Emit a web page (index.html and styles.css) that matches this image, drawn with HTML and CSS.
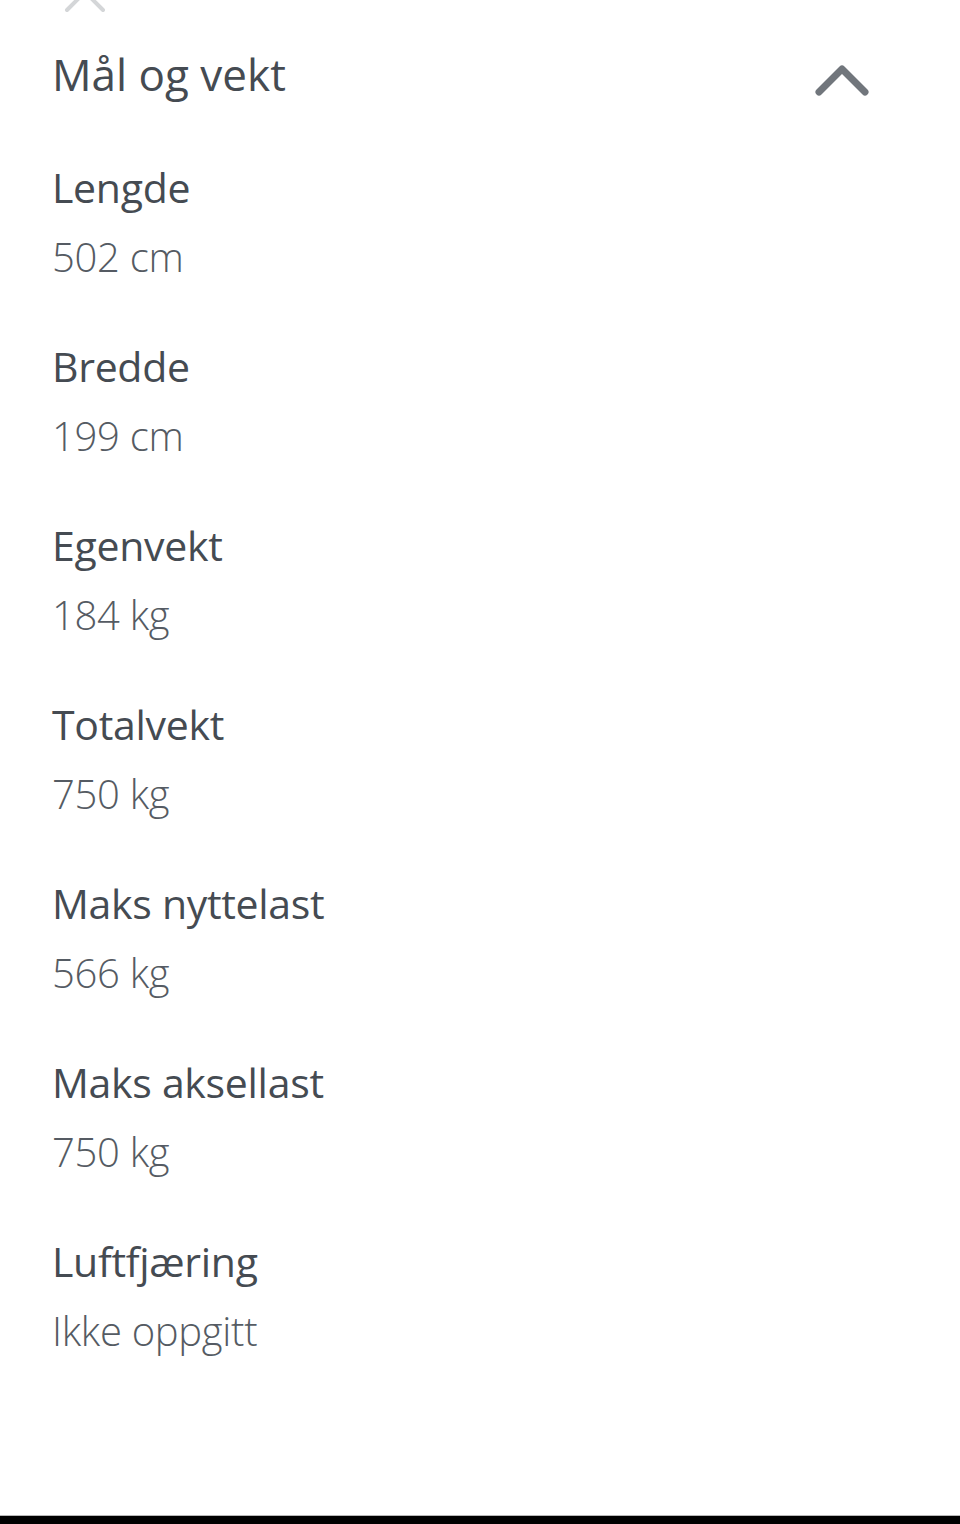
FILE: index.html
```html
<!DOCTYPE html>
<html lang="no">
<head>
<meta charset="utf-8">
<link rel="stylesheet" href="styles.css">
</head>
<body>
<div class="screen">
  <div class="close-wrap">
    <svg class="close" width="44" height="44" viewBox="0 0 44 44"><path d="M4 4 L40 40 M40 4 L4 40" stroke="#d4d6d8" stroke-width="4" stroke-linecap="round" fill="none"/></svg>
  </div>
  <div class="header">
    <h1 class="title">Mål og vekt</h1>
    <svg class="chevron" width="56" height="34" viewBox="0 0 56 34"><path d="M5 29 L28 6 L51 29" stroke="#71767c" stroke-width="7" stroke-linecap="round" stroke-linejoin="round" fill="none"/></svg>
  </div>
  <dl class="specs">
    <div class="item"><dt>Lengde</dt><dd>502 cm</dd></div>
    <div class="item"><dt>Bredde</dt><dd>199 cm</dd></div>
    <div class="item"><dt>Egenvekt</dt><dd>184 kg</dd></div>
    <div class="item"><dt>Totalvekt</dt><dd>750 kg</dd></div>
    <div class="item"><dt>Maks nyttelast</dt><dd>566 kg</dd></div>
    <div class="item"><dt>Maks aksellast</dt><dd>750 kg</dd></div>
    <div class="item"><dt>Luftfjæring</dt><dd>Ikke oppgitt</dd></div>
  </dl>
  <div class="spacer"></div>
  <div class="navbar"></div>
</div>
</body>
</html>
```
FILE: styles.css
```css
html, body {
  margin: 0;
  padding: 0;
  background: #ffffff;
}
.screen {
  width: 960px;
  height: 1524px;
  display: flex;
  flex-direction: column;
  font-family: "Open Sans", "Noto Sans", sans-serif;
  overflow: hidden;
}
.close-wrap {
  height: 0;
  position: relative;
}
.close {
  position: absolute;
  left: 63px;
  top: -30px;
}
.header {
  display: flex;
  align-items: center;
  justify-content: space-between;
  padding: 42px 90px 0 52px;
  height: 64px;
}
.title {
  margin: 0;
  font-size: 44px;
  font-weight: 500;
  color: #454b52;
  line-height: 64px;
}
.chevron {
  margin-top: 12px;
}
.specs {
  margin: 0;
  padding: 0 0 0 52px;
  display: flex;
  flex-direction: column;
}
.item {
  height: 179px;
  padding-top: 57px;
  box-sizing: border-box;
}
dt {
  font-size: 41px;
  font-weight: 500;
  color: #454b52;
  line-height: 48px;
  margin: 0;
  letter-spacing: -0.3px;
}
dd {
  margin: 22px 0 0 0;
  font-size: 40px;
  font-weight: 300;
  color: #555b63;
  line-height: 48px;
  letter-spacing: -0.3px;
}
.spacer {
  flex: 1;
}
.navbar {
  height: 8px;
  background: #000;
  border-top: 1px solid #b8b8b8;
}
```
